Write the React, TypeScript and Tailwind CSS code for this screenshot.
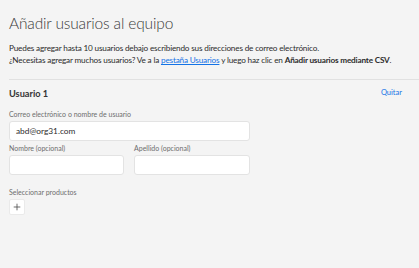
import { Plus } from 'lucide-react';

function Field({ label, value, className }: { label: string; value?: string; className?: string }) {
  return (
    <div className={className}>
      <label className="block text-[7px] text-[#6e6e6e] leading-[10px] mb-[2px]">{label}</label>
      <div className="h-[20px] bg-white border border-[#e3e3e3] rounded-[3px] flex items-center px-[6px] text-[8.3px] text-[#2c2c2c]">
        {value}
      </div>
    </div>
  );
}

export default function App() {
  return (
    <div
      className="w-[419px] h-[268px] bg-[#f4f4f4] overflow-hidden text-[#2c2c2c]"
      style={{ fontFamily: 'Lato, "Open Sans", sans-serif' }}
    >
      {/* Header */}
      <div className="pl-[9px] pt-[13px]">
        <h1 className="text-[15.5px] font-light leading-[20px] tracking-[-0.15px] text-[#3a3a3a]">
          Añadir usuarios al equipo
        </h1>
        <div className="mt-[9px] text-[8.2px] leading-[12px] tracking-[-0.18px] text-[#2c2c2c] whitespace-nowrap">
          <p>Puedes agregar hasta 10 usuarios debajo escribiendo sus direcciones de correo electrónico.</p>
          <p>
            ¿Necesitas agregar muchos usuarios? Ve a la{' '}
            <span className="text-[#1473e6] underline">pestaña Usuarios</span> y luego haz clic en{' '}
            <span className="font-bold">Añadir usuarios mediante CSV</span>.
          </p>
        </div>
      </div>

      {/* User block */}
      <div className="ml-[9px] mt-[13px] border-t border-[#e1e1e1]">
        <div className="flex items-center justify-between pr-[17px] pt-[8px] leading-[12px]">
          <span className="text-[9.2px] font-bold text-[#333333]">Usuario 1</span>
          <span className="text-[7.5px] text-[#1473e6] -mt-[3px]">Quitar</span>
        </div>

        <Field
          className="w-[241px] mt-[9px]"
          label="Correo electrónico o nombre de usuario"
          value="abd@org31.com"
        />

        <div className="flex gap-[10px] mt-[2px] w-[241px]">
          <Field className="w-[115px]" label="Nombre (opcional)" />
          <Field className="w-[116px]" label="Apellido (opcional)" />
        </div>

        <div className="mt-[12px]">
          <div className="text-[7px] text-[#6e6e6e] leading-[10px]">Seleccionar productos</div>
          <button className="mt-[2px] w-[16px] h-[16px] bg-white border border-[#eaeaea] rounded-[2px] flex items-center justify-center">
            <Plus className="w-[10px] h-[10px] text-[#505050]" strokeWidth={2} />
          </button>
        </div>
      </div>
    </div>
  );
}
